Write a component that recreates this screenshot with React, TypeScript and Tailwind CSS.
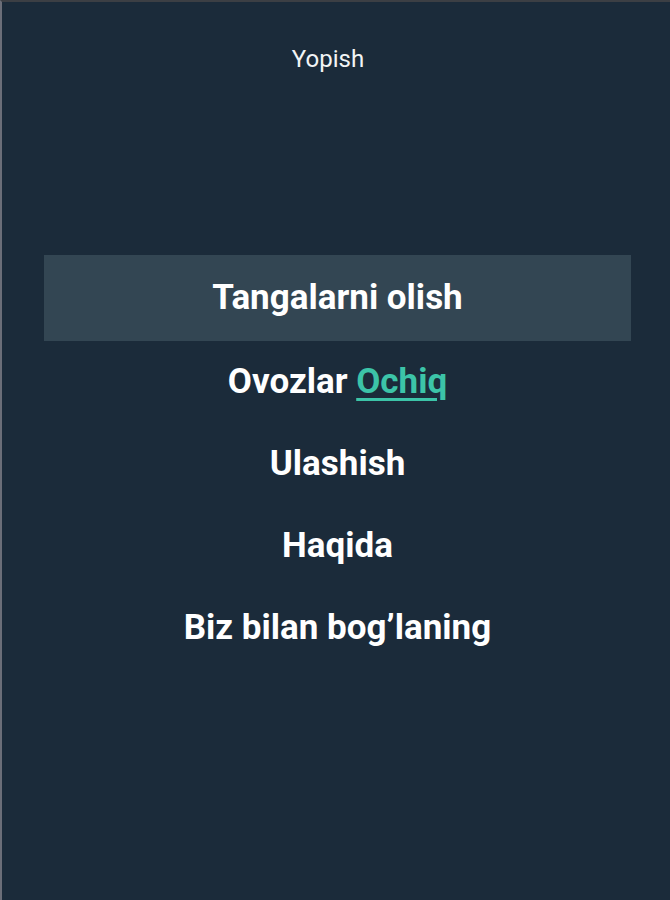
const ITEMS = ['Ulashish', 'Haqida', 'Biz bilan bog’laning'];

export default function App() {
  return (
    <div
      className="h-[900px] w-full border-t-2 border-l-2 border-t-[#3c3f44] border-l-[#6b6e78] bg-[#1b2b3a] text-white"
      style={{ fontFamily: 'Roboto, "Liberation Sans", sans-serif' }}
    >
      <div className="flex h-[116px] items-center justify-center pr-[16px] pb-[2px] text-[24px] text-[#f2f4f5]">
        Yopish
      </div>

      <div className="mt-[137px] flex flex-col pl-[42px] pr-[39px]">
        <div className="flex h-[86px] items-center justify-center bg-[#334653] text-[35px] font-bold">
          Tangalarni olish
        </div>
        <div className="flex h-[82px] items-center justify-center text-[35px] font-bold">
          Ovozlar&nbsp;
          <span className="text-[#3cc4a8] underline decoration-[3px] underline-offset-[5px]">Ochiq</span>
        </div>
        {ITEMS.map((t) => (
          <div key={t} className="flex h-[82px] items-center justify-center text-[35px] font-bold">
            {t}
          </div>
        ))}
      </div>
    </div>
  );
}
